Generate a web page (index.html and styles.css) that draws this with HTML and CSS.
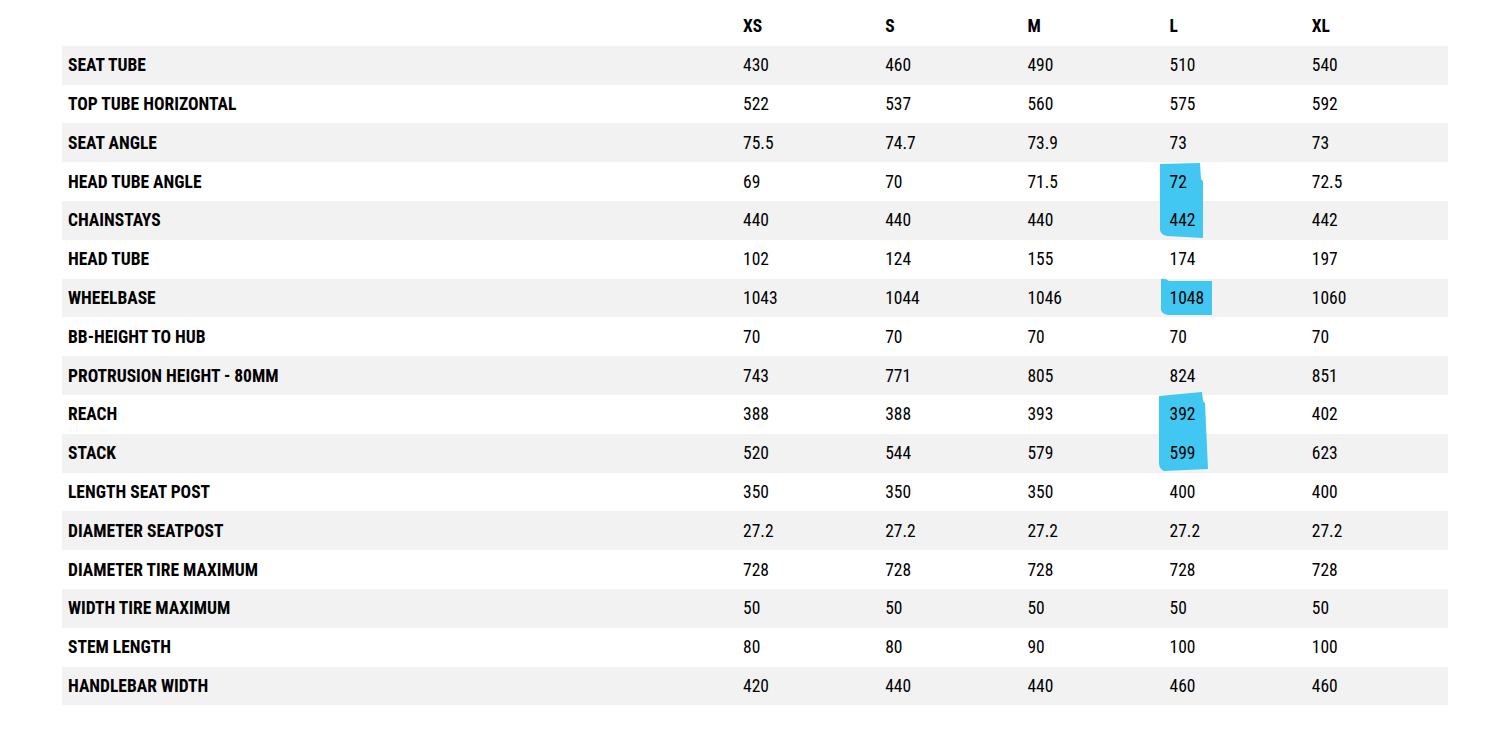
FILE: index.html
```html
<!DOCTYPE html>
<html>
<head>
<meta charset="utf-8">
<link rel="stylesheet" href="styles.css">
</head>
<body>
<table class="geo">
  <thead>
    <tr><th class="label"></th><th>XS</th><th>S</th><th>M</th><th>L</th><th>XL</th></tr>
  </thead>
  <tbody>
    <tr><th class="label">SEAT TUBE</th><td>430</td><td>460</td><td>490</td><td>510</td><td>540</td></tr>
    <tr><th class="label">TOP TUBE HORIZONTAL</th><td>522</td><td>537</td><td>560</td><td>575</td><td>592</td></tr>
    <tr><th class="label">SEAT ANGLE</th><td>75.5</td><td>74.7</td><td>73.9</td><td>73</td><td>73</td></tr>
    <tr><th class="label">HEAD TUBE ANGLE</th><td>69</td><td>70</td><td>71.5</td><td class="hl"><svg class="mark mark-a" width="48" height="80" viewBox="0 0 48 80"><path d="M2,2 L42,1 L43,17 L45,19 L45,76 L9,74 Q3,73 2,68 Z"/></svg><span class="v">72</span></td><td>72.5</td></tr>
    <tr><th class="label">CHAINSTAYS</th><td>440</td><td>440</td><td>440</td><td><span class="v">442</span></td><td>442</td></tr>
    <tr><th class="label">HEAD TUBE</th><td>102</td><td>124</td><td>155</td><td>174</td><td>197</td></tr>
    <tr><th class="label">WHEELBASE</th><td>1043</td><td>1044</td><td>1046</td><td class="hl"><svg class="mark mark-b" width="56" height="40" viewBox="0 0 56 40"><path d="M3,2 Q7,1 11,4 L54,4 L54,38 L10,38 Q4,37 3,33 Z"/></svg><span class="v">1048</span></td><td>1060</td></tr>
    <tr><th class="label">BB-HEIGHT TO HUB</th><td>70</td><td>70</td><td>70</td><td>70</td><td>70</td></tr>
    <tr><th class="label">PROTRUSION HEIGHT - 80MM</th><td>743</td><td>771</td><td>805</td><td>824</td><td>851</td></tr>
    <tr><th class="label">REACH</th><td>388</td><td>388</td><td>393</td><td class="hl"><svg class="mark mark-c" width="54" height="82" viewBox="0 0 54 82"><path d="M3,5 L46,1 L47,10 L49,12 L52,78 L8,80 Q3,78 3,72 Z"/></svg><span class="v">392</span></td><td>402</td></tr>
    <tr><th class="label">STACK</th><td>520</td><td>544</td><td>579</td><td><span class="v">599</span></td><td>623</td></tr>
    <tr><th class="label">LENGTH SEAT POST</th><td>350</td><td>350</td><td>350</td><td>400</td><td>400</td></tr>
    <tr><th class="label">DIAMETER SEATPOST</th><td>27.2</td><td>27.2</td><td>27.2</td><td>27.2</td><td>27.2</td></tr>
    <tr><th class="label">DIAMETER TIRE MAXIMUM</th><td>728</td><td>728</td><td>728</td><td>728</td><td>728</td></tr>
    <tr><th class="label">WIDTH TIRE MAXIMUM</th><td>50</td><td>50</td><td>50</td><td>50</td><td>50</td></tr>
    <tr><th class="label">STEM LENGTH</th><td>80</td><td>80</td><td>90</td><td>100</td><td>100</td></tr>
    <tr><th class="label">HANDLEBAR WIDTH</th><td>420</td><td>440</td><td>440</td><td>460</td><td>460</td></tr>
  </tbody>
</table>
</body>
</html>
```
FILE: styles.css
```css
html, body {
  margin: 0;
  padding: 0;
  background: #ffffff;
}
body {
  padding: 7px 64px 0 62px;
  font-family: "Roboto Condensed", "Liberation Sans Narrow", Roboto, "Liberation Sans", sans-serif;
  font-stretch: condensed;
  color: #000;
}
.geo {
  border-collapse: collapse;
  width: 1386px;
  table-layout: fixed;
  font-size: 17.5px;
}
.geo th, .geo td {
  height: 38.8px;
  padding: 0 6px;
  text-align: left;
  vertical-align: middle;
  white-space: nowrap;
}
.geo th.label {
  width: 663px;
  font-weight: 700;
}
.geo thead th {
  font-weight: 700;
}
.geo td {
  font-weight: 400;
}
.geo tbody tr:nth-child(odd) {
  background: #f2f2f2;
}
.geo td.hl {
  position: relative;
}
.v {
  position: relative;
}
.mark {
  position: absolute;
  fill: #41c7f1;
}
.mark-a {
  left: -6px;
  top: 0;
}
.mark-b {
  left: -6px;
  top: -2px;
}
.mark-c {
  left: -8px;
  top: -4px;
}
```
